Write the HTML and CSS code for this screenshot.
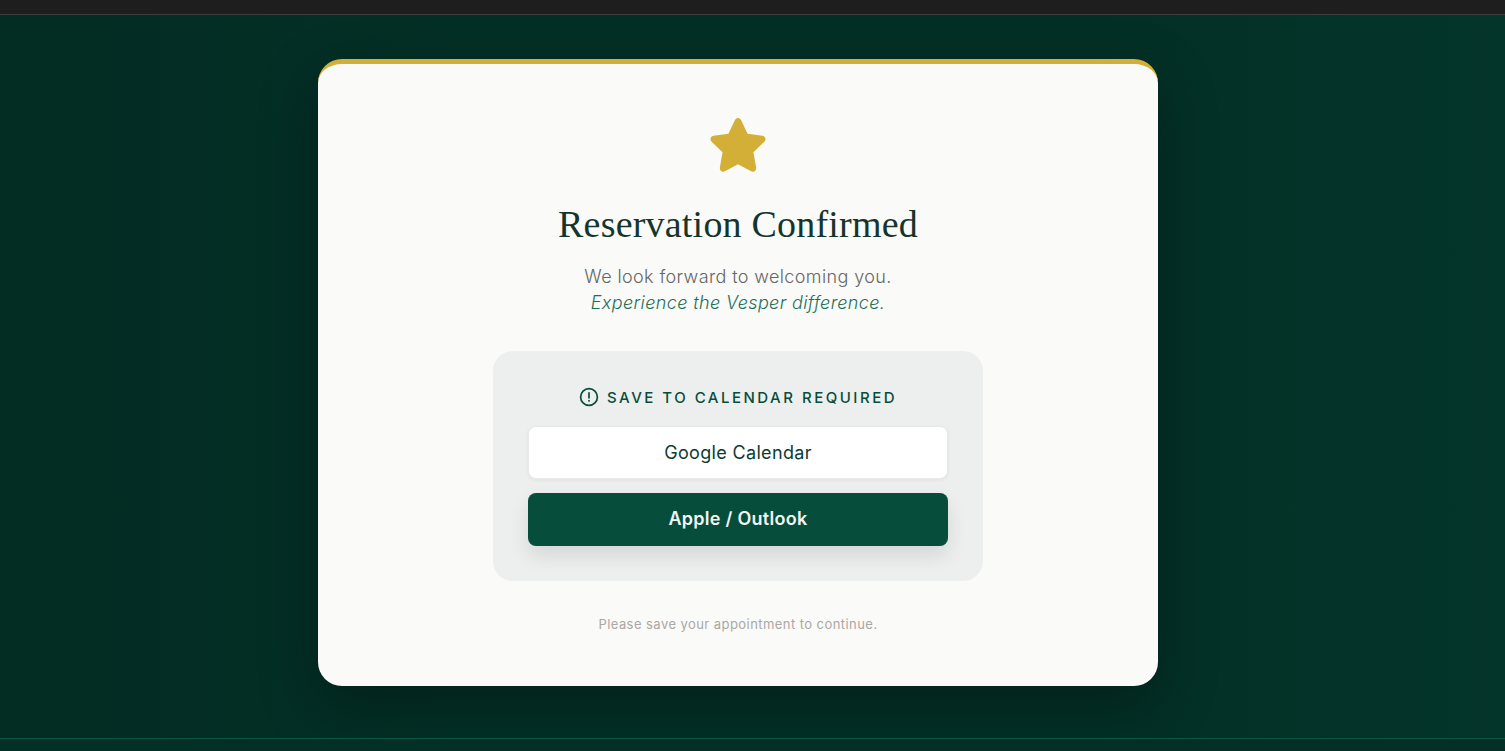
FILE: index.html
```html
<!DOCTYPE html>
<html lang="en">
<head>
<meta charset="UTF-8">
<meta name="viewport" content="width=device-width, initial-scale=1.0">
<title>Reservation Confirmed</title>
<link rel="stylesheet" href="styles.css">
</head>
<body>

<div class="topbar"></div>

<main class="stage">
  <section class="card">
    <svg class="star" viewBox="0 0 24 24" aria-hidden="true">
      <path d="M12 2.6c.5 0 .9.3 1.1.7l2.5 5.2 5.6.8c1.1.2 1.5 1.5.7 2.2l-4.1 4 1 5.7c.2 1.1-.9 1.9-1.9 1.4L12 20l-4.9 2.6c-1 .5-2.1-.3-1.9-1.4l1-5.7-4.1-4c-.8-.7-.4-2 .7-2.2l5.6-.8 2.5-5.2c.2-.4.6-.7 1.1-.7z"/>
    </svg>
    <h1>Reservation Confirmed</h1>
    <p class="lead">We look forward to welcoming you.<br><em>Experience the Vesper difference.</em></p>

    <div class="panel">
      <div class="panel-title">
        <svg class="alert" viewBox="0 0 20 20" aria-hidden="true">
          <circle cx="10" cy="10" r="8.4"/>
          <path d="M10 5.8v5"/>
          <path d="M10 13.6v.4"/>
        </svg>
        <span>SAVE TO CALENDAR REQUIRED</span>
      </div>
      <button class="btn btn-light">Google Calendar</button>
      <button class="btn btn-dark">Apple / Outlook</button>
    </div>

    <p class="note">Please save your appointment to continue.</p>
  </section>
</main>

<div class="bottombar"></div>

</body>
</html>
```

FILE: styles.css
```css
html, body {
  height: 100%;
}
body {
  margin: 0;
  display: flex;
  flex-direction: column;
  overflow: hidden;
  font-family: 'Inter', 'Open Sans', sans-serif;
  background-color: #033026;
}
.topbar {
  height: 14px;
  flex: none;
  background-color: #1e1e1e;
  border-bottom: 1px solid #3d3d3d;
}
/* card sits left of true centre, the page had a gutter on the right */
.stage {
  flex: 1;
  display: flex;
  justify-content: center;
  align-items: flex-start;
  padding: 44px 29px 0 0;
  background: linear-gradient(90deg, #032c23 0%, #033026 30%, #033026 75%, #04352a 100%);
}
.bottombar {
  height: 12px;
  flex: none;
  background-color: #033026;
  border-top: 1px solid #0a5540;
}
.card {
  width: 840px;
  height: 627px;
  box-sizing: border-box;
  background-color: #fafaf8;
  border-top: 5px solid #d4af37;
  border-radius: 24px;
  box-shadow: 0 20px 60px rgba(0, 0, 0, 0.3);
  display: flex;
  flex-direction: column;
  align-items: center;
  padding-top: 47px;
}
.star {
  width: 64px;
  height: 64px;
  fill: #d4af37;
}
h1 {
  margin: 26px 0 0;
  font-family: 'Liberation Serif', serif;
  font-weight: normal;
  font-size: 38px;
  line-height: 46px;
  letter-spacing: 0.2px;
  color: #15352c;
}
.lead {
  margin: 17px 0 0;
  font-size: 18px;
  font-weight: 300;
  line-height: 26px;
  letter-spacing: 0.38px;
  text-align: center;
  color: #666;
}
.lead em {
  color: #1f6f58;
}
.panel {
  width: 490px;
  height: 230px;
  box-sizing: border-box;
  margin-top: 35px;
  padding: 35px;
  background-color: #edefef;
  border-radius: 20px;
  display: flex;
  flex-direction: column;
}
.panel-title {
  height: 22px;
  display: flex;
  align-items: center;
  justify-content: center;
  gap: 8px;
  margin-bottom: 18px;
  font-size: 15px;
  font-weight: 500;
  letter-spacing: 2.5px;
  color: #084c3a;
}
.alert {
  width: 20px;
  height: 20px;
  fill: none;
  stroke: #084c3a;
  stroke-width: 1.7;
  stroke-linecap: round;
}
.btn {
  height: 53px;
  flex: none;
  border: none;
  border-radius: 8px;
  font-family: inherit;
  font-size: 18px;
  cursor: pointer;
}
.btn-light {
  background-color: #fff;
  border: 1px solid #e8eaea;
  color: #0d3b30;
  letter-spacing: 0.33px;
  box-shadow: 0 1px 4px rgba(0, 0, 0, 0.06);
  margin-bottom: 14px;
}
.btn-dark {
  background-color: #064e3b;
  color: #f4f5f2;
  font-weight: 600;
  letter-spacing: 0.27px;
  padding-bottom: 3px;
  box-shadow: 0 10px 20px rgba(0, 0, 0, 0.1);
}
.note {
  margin: 33px 0 0;
  font-size: 13px;
  line-height: 20px;
  letter-spacing: 0.44px;
  color: #aaa7a5;
}
```
